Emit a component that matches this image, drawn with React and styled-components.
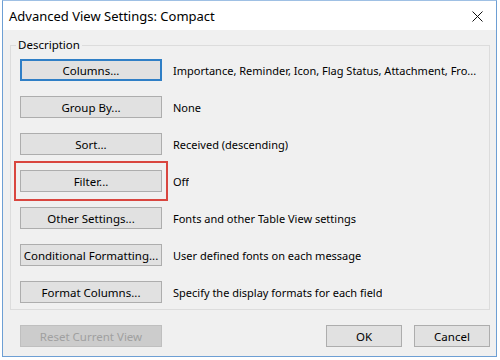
import React from "react";
import styled, { createGlobalStyle } from "styled-components";

const GlobalStyle = createGlobalStyle`
  html, body {
    margin: 0;
    padding: 0;
    background: #ffffff;
  }
  body {
    font-family: "Noto Sans", "Open Sans", sans-serif;
    font-size: 11.5px;
    color: #000;
  }
`;

const rows = [
  { label: "Columns...", text: "Importance, Reminder, Icon, Flag Status, Attachment, Fro...", isDefault: true },
  { label: "Group By...", text: "None" },
  { label: "Sort...", text: "Received (descending)" },
  { label: "Filter...", text: "Off", marked: true },
  { label: "Other Settings...", text: "Fonts and other Table View settings" },
  { label: "Conditional Formatting...", text: "User defined fonts on each message" },
  { label: "Format Columns...", text: "Specify the display formats for each field" },
];

const App = () => {
  return (
    <>
      <GlobalStyle />
      <Window>
        <TitleBar>
          <Title>Advanced View Settings: Compact</Title>
          <CloseButton>
            <svg width="11" height="11" viewBox="0 0 11 11">
              <path d="M0.5 0.5 L10.5 10.5 M10.5 0.5 L0.5 10.5" stroke="#111" strokeWidth="1" fill="none" />
            </svg>
          </CloseButton>
        </TitleBar>
        <Body>
          <Group>
            <Legend>Description</Legend>
            <Rows>
              {rows.map((row) => (
                <Row key={row.label}>
                  <Mark $on={row.marked}>
                    <Button $default={row.isDefault}>{row.label}</Button>
                  </Mark>
                  <Info>{row.text}</Info>
                </Row>
              ))}
            </Rows>
          </Group>
          <Footer>
            <Button disabled>Reset Current View</Button>
            <Actions>
              <SmallButton>OK</SmallButton>
              <SmallButton>Cancel</SmallButton>
            </Actions>
          </Footer>
        </Body>
      </Window>
    </>
  );
};

const Window = styled.div`
  margin: 0 3px 0 2px;
  width: 495px;
  height: 357px;
  box-sizing: border-box;
  border: 1px solid #6d9fd4;
  border-top-color: #9fc0e4;
  display: flex;
  flex-direction: column;
  background: #f0f0f0;
`;

const TitleBar = styled.div`
  height: 29px;
  background: #ffffff;
  display: flex;
  align-items: center;
  justify-content: space-between;
  padding: 0 13px 0 6px;
`;

const Title = styled.span`
  font-size: 13px;
  color: #000;
`;

const CloseButton = styled.span`
  display: flex;
  align-items: center;
  padding-top: 2px;
`;

const Body = styled.div`
  flex: 1;
  padding: 7px 6px 0 7px;
  display: flex;
  flex-direction: column;
`;

const Group = styled.fieldset`
  margin: 0;
  padding: 6px 0 6px 9px;
  border: 1px solid #dcdcdc;
  border-radius: 0;
  min-width: 0;
`;

const Legend = styled.legend`
  padding: 0 2px;
  margin-left: -4px;
  font-size: 11.5px;
  line-height: 16px;
`;

const Rows = styled.div`
  display: flex;
  flex-direction: column;
  gap: 15px;
`;

const Row = styled.div`
  display: flex;
  align-items: center;
  gap: 11px;
  white-space: nowrap;
  min-width: 0;
`;

const Mark = styled.div`
  display: flex;
  flex-shrink: 0;
  margin: ${(p) => (p.$on ? "-9px -6px" : "0")};
  padding: ${(p) => (p.$on ? "7px 4px" : "0")};
  border: ${(p) => (p.$on ? "2px solid #d9463f" : "none")};
`;

const Button = styled.button`
  width: 142px;
  height: 22px;
  box-sizing: border-box;
  margin: 0;
  padding: 0;
  font-family: "Noto Sans", "Open Sans", sans-serif;
  font-size: 11.5px;
  color: #000;
  background: #e1e1e1;
  border: ${(p) => (p.$default ? "2px solid #2f7fc6" : "1px solid #adadad")};
  border-radius: 0;

  &:disabled {
    background: #cccccc;
    border-color: #bfbfbf;
    color: #a0a0a0;
  }
`;

const SmallButton = styled(Button)`
  width: 76px;
`;

const Info = styled.span`
  font-size: 11px;
  overflow: hidden;
`;

const Footer = styled.div`
  display: flex;
  justify-content: space-between;
  padding: 15px 0 0 10px;
`;

const Actions = styled.div`
  display: flex;
  gap: 12px;
`;

export default App;
